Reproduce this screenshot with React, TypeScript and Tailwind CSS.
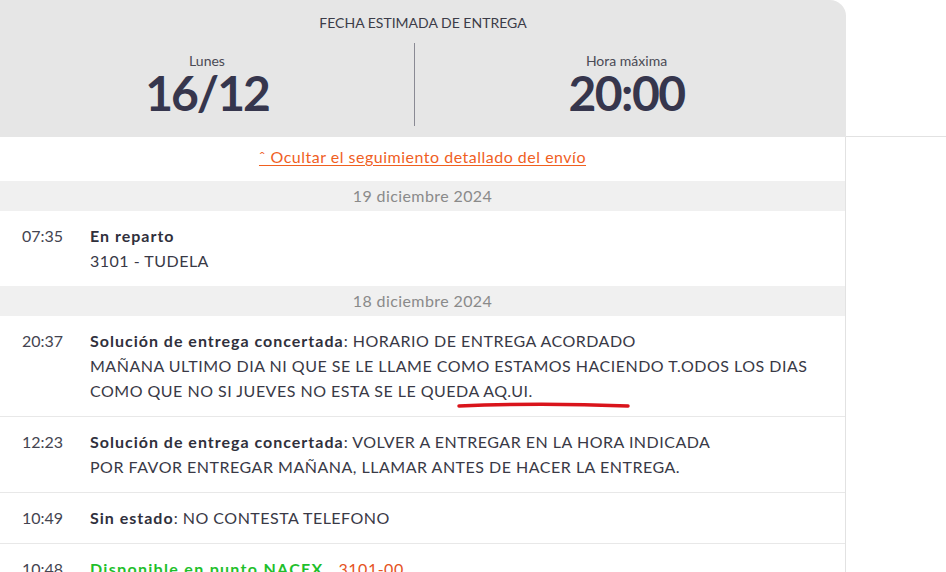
import React from 'react';

type Entry = {
  time: string;
  title: string;
  text?: string;
  lines?: string[];
  green?: boolean;
  code?: string;
  mark?: boolean;
  last?: boolean;
};

const days: { date: string; entries: Entry[] }[] = [
  {
    date: '19 diciembre 2024',
    entries: [{ time: '07:35', title: 'En reparto', lines: ['3101 - TUDELA'], last: true }]
  },
  {
    date: '18 diciembre 2024',
    entries: [
      {
        time: '20:37',
        title: 'Solución de entrega concertada',
        text: ': HORARIO DE ENTREGA ACORDADO',
        lines: [
          'MAÑANA ULTIMO DIA NI QUE SE LE LLAME COMO ESTAMOS HACIENDO T.ODOS LOS DIAS',
          'COMO QUE NO SI JUEVES NO ESTA SE LE QUEDA AQ.UI.'
        ],
        mark: true
      },
      {
        time: '12:23',
        title: 'Solución de entrega concertada',
        text: ': VOLVER A ENTREGAR EN LA HORA INDICADA',
        lines: ['POR FAVOR ENTREGAR MAÑANA, LLAMAR ANTES DE HACER LA ENTREGA.']
      },
      { time: '10:49', title: 'Sin estado', text: ': NO CONTESTA TELEFONO' },
      { time: '10:48', title: 'Disponible en punto NACEX', green: true, code: '3101-00' }
    ]
  }
];

function Row({ e }: { e: Entry }) {
  return (
    <div
      className={`relative flex pl-[22px] pt-[12px] pb-[13px] text-[16px] leading-[25px] ${
        e.last ? '' : 'border-b border-[#e8e8e8]'
      }`}
    >
      <span className="w-[68px] shrink-0 text-[#444450]">{e.time}</span>
      <div className="tracking-[0.5px] text-[#393946]">
        <div>
          <span
            className={
              e.green
                ? 'font-bold tracking-[1.3px] text-[#1fbf2c]'
                : 'font-bold tracking-[1px] text-[#30303c]'
            }
          >
            {e.title}
          </span>
          {e.text}
          {e.code ? <span className="ml-[15px] text-[#e5531f]">{e.code}</span> : null}
        </div>
        {e.lines?.map((l) => (
          <div key={l}>{l}</div>
        ))}
      </div>
      {e.mark ? (
        <svg className="absolute left-[456px] top-[86px]" width="176" height="8" viewBox="0 0 176 8">
          <path d="M3 4 C 50 2, 120 2, 172 4" stroke="#d9141b" strokeWidth="3.5" strokeLinecap="round" fill="none" />
        </svg>
      ) : null}
    </div>
  );
}

export default function App() {
  return (
    <div className="h-[572px] w-[946px] overflow-hidden bg-white font-['Lato',sans-serif]">
      <div className="flex">
        <div className="w-[846px] shrink-0">
          <div className="h-[137px] rounded-tr-[16px] bg-[#e6e6e6] pt-[14px]">
            <p className="text-center text-[14px] leading-[17px] text-[#3c3c48]">FECHA ESTIMADA DE ENTREGA</p>
            <div className="mt-[12px] flex">
              <div className="flex w-[414px] flex-col items-center pt-[10px]">
                <span className="text-[14px] leading-[16px] text-[#4a4a55]">Lunes</span>
                <span className="text-[48px] font-bold leading-[48px] tracking-[-2px] text-[#36364d]">16/12</span>
              </div>
              <div className="h-[83px] w-px bg-[#8a8a94]" />
              <div className="flex flex-1 flex-col items-center pt-[10px] pr-[8px]">
                <span className="text-[14px] leading-[16px] text-[#4a4a55]">Hora máxima</span>
                <span className="text-[48px] font-bold leading-[48px] tracking-[-1.5px] text-[#36364d]">20:00</span>
              </div>
            </div>
          </div>
          <div className="border-r border-[#e2e2e2]">
            <div className="flex h-[44px] items-center justify-center pb-[4px]">
              <a className="text-[16px] tracking-[0.5px] text-[#f0601f] underline underline-offset-2">
                ˆ Ocultar el seguimiento detallado del envío
              </a>
            </div>
            {days.map((d) => (
              <div key={d.date}>
                <div className="flex h-[30px] items-center justify-center bg-[#f0f0f0] text-[16px] tracking-[0.4px] text-[#8a8a8a]">
                  {d.date}
                </div>
                {d.entries.map((e) => (
                  <Row key={e.time} e={e} />
                ))}
              </div>
            ))}
          </div>
        </div>
        <div className="flex-1">
          <div className="h-[137px] border-b border-[#e2e2e2]" />
        </div>
      </div>
    </div>
  );
}
